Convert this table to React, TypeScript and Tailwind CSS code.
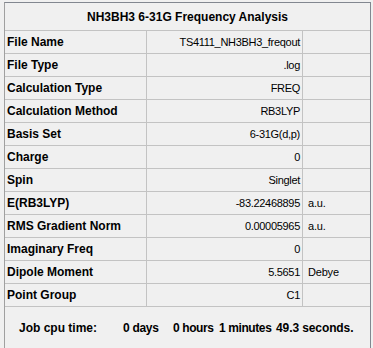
import React from "react";

const rows: [string, string, string][] = [
  ["File Name", "TS4111_NH3BH3_freqout", ""],
  ["File Type", ".log", ""],
  ["Calculation Type", "FREQ", ""],
  ["Calculation Method", "RB3LYP", ""],
  ["Basis Set", "6-31G(d,p)", ""],
  ["Charge", "0", ""],
  ["Spin", "Singlet", ""],
  ["E(RB3LYP)", "-83.22468895", "a.u."],
  ["RMS Gradient Norm", "0.00005965", "a.u."],
  ["Imaginary Freq", "0", ""],
  ["Dipole Moment", "5.5651", "Debye"],
  ["Point Group", "C1", ""],
];

export default function App() {
  return (
    <div
      className="h-[348px] w-[373px] overflow-hidden bg-[#f0f0f0] pt-[2px] pl-[4px] text-black"
      style={{ fontFamily: '"Liberation Sans", Arial, sans-serif' }}
    >
      <div className="w-[367px] border-t border-r border-l border-t-[#828790] border-r-[#828790] border-l-[#a0a0a0]">
        <div className="flex h-[28px] items-center justify-center border-b border-[#c3c3c3] text-[12px] font-bold">
          NH3BH3 6-31G Frequency Analysis
        </div>
        {rows.map(([label, value, unit]) => (
          <div key={label} className="flex h-[23px] border-b border-[#c3c3c3]">
            <div className="flex w-[142px] shrink-0 items-center border-r border-[#c3c3c3] pl-[2px] text-[12px] font-bold">
              {label}
            </div>
            <div className="flex w-[156px] shrink-0 items-center justify-end border-r border-[#c3c3c3] pr-[2px] text-[11px] tracking-[-0.3px]">
              {value}
            </div>
            <div className="flex flex-1 items-center pl-[5px] text-[11px] tracking-[-0.2px]">
              {unit}
            </div>
          </div>
        ))}
        <div className="flex h-[42px] items-center pl-[14px] text-[12px] font-bold whitespace-nowrap">
          <span className="w-[104px] shrink-0">Job cpu time:</span>
          <span className="w-[50px] shrink-0 tracking-[-0.3px]">0 days</span>
          <span className="w-[46px] shrink-0 tracking-[-0.4px]">0 hours</span>
          <span className="w-[57px] shrink-0 tracking-[-0.4px]">1 minutes</span>
          <span className="tracking-[-0.1px]">49.3 seconds.</span>
        </div>
      </div>
    </div>
  );
}
